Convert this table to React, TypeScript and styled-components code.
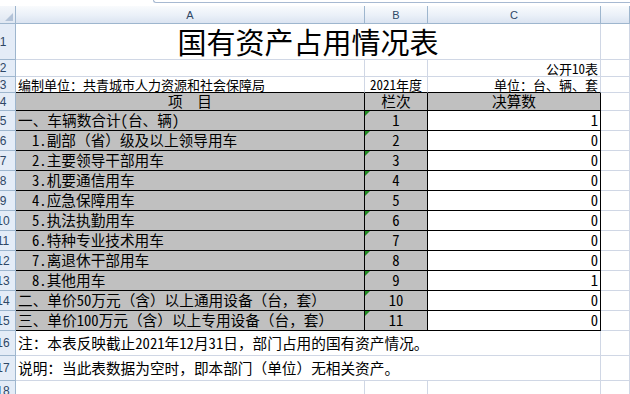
import React from "react";
import styled, { createGlobalStyle, css } from "styled-components";

const GRID = "#d0d7e5";
const HEAD_LINE = "#9eb6ce";
const BLACK = "#000000";
const GRAY = "#c0c0c0";
const COLS = "16px 349px 63px 173px 1fr";

const GlobalStyle = createGlobalStyle`
  html, body { margin: 0; padding: 0; background: #ffffff; overflow: hidden; }
  body { font-family: "Noto Sans CJK SC", "Noto Sans CJK JP", sans-serif; }
  #root { width: 630px; height: 394px; }
`;

const Sheet = styled.div`
  width: 630px;
  height: 394px;
  overflow: hidden;
  background: #ffffff;
  display: flex;
  flex-direction: column;
`;

const TopStrip = styled.div`
  flex: none;
  height: 6px;
  display: flex;
  background: #ffffff;
`;

const FormulaEdge = styled.div`
  margin-left: 153px;
  flex: 1;
  height: 2px;
  border-left: 1px solid #a7b9d1;
  border-bottom: 1px solid #a7b9d1;
  border-bottom-left-radius: 3px;
`;

const Row = styled.div<{ $h: number }>`
  flex: none;
  display: grid;
  grid-template-columns: ${COLS};
  grid-template-rows: ${(p) => p.$h}px;
  height: ${(p) => p.$h}px;
`;

const HeadBase = css`
  box-sizing: border-box;
  border-right: 1px solid ${HEAD_LINE};
  border-bottom: 1px solid ${HEAD_LINE};
  color: #2e4766;
  font-family: "Liberation Sans", Arial, sans-serif;
`;

const Corner = styled.div`
  ${HeadBase};
  background: linear-gradient(#f4f7fb, #dfe7f2);
  display: flex;
  align-items: flex-end;
  justify-content: flex-end;
  padding: 0 2px 2px 0;
`;

const CornerMark = styled.div`
  width: 0;
  height: 0;
  border-left: 8px solid transparent;
  border-bottom: 8px solid #b3c3d8;
`;

const ColHead = styled.div`
  ${HeadBase};
  background: linear-gradient(#f9fbfd, #eaf0f8 55%, #dbe4f1);
  display: flex;
  align-items: center;
  justify-content: center;
  font-size: 11px;
`;

const RowHead = styled.div`
  ${HeadBase};
  background: #e4ecf7;
  overflow: hidden;
  display: flex;
  align-items: center;
  justify-content: flex-end;
`;

const RowNum = styled.span`
  flex: none;
  width: 24px;
  text-align: center;
  font-size: 12px;
  line-height: 1;
`;

type Align = "left" | "center" | "right";

const Cell = styled.div<{
  $fill?: string;
  $align?: Align;
  $bottom?: string;
  $right?: string;
  $span?: number;
  $size?: number;
  $pb?: number;
  $indent?: number;
  $flag?: boolean;
}>`
  position: relative;
  box-sizing: border-box;
  min-width: 0;
  grid-column: span ${(p) => p.$span ?? 1};
  background: ${(p) => p.$fill ?? "#ffffff"};
  border-right: 1px solid ${(p) => p.$right ?? GRID};
  border-bottom: 1px solid ${(p) => p.$bottom ?? GRID};
  display: flex;
  align-items: flex-end;
  justify-content: ${(p) =>
    p.$align === "center" ? "center" : p.$align === "right" ? "flex-end" : "flex-start"};
  padding: 0 2px ${(p) => p.$pb ?? 2}px ${(p) => 2 + (p.$indent ?? 0)}px;
  font-size: ${(p) => p.$size ?? 14.67}px;
  line-height: 1;
  white-space: nowrap;
  color: #000000;
  ${(p) =>
    p.$flag &&
    css`
      &::before {
        content: "";
        position: absolute;
        left: 0;
        top: 0;
        border-top: 5px solid #1f8a1f;
        border-right: 5px solid transparent;
      }
    `}
`;

const Half = styled.span`
  font-feature-settings: "hwid" 1;
`;

function T({ children }: { children: string }) {
  const parts = children.split(/([\x21-\x7e]+)/);
  return (
    <>
      {parts.map((p, i) =>
        /[\x21-\x7e]/.test(p) ? <Half key={i}>{p}</Half> : <React.Fragment key={i}>{p}</React.Fragment>
      )}
    </>
  );
}

const items = [
  { label: "一、车辆数合计(台、辆)", indent: 0, value: "1" },
  { label: "1.副部（省）级及以上领导用车", indent: 14, value: "0" },
  { label: "2.主要领导干部用车", indent: 14, value: "0" },
  { label: "3.机要通信用车", indent: 14, value: "0" },
  { label: "4.应急保障用车", indent: 14, value: "0" },
  { label: "5.执法执勤用车", indent: 14, value: "0" },
  { label: "6.特种专业技术用车", indent: 14, value: "0" },
  { label: "7.离退休干部用车", indent: 14, value: "0" },
  { label: "8.其他用车", indent: 14, value: "1" },
  { label: "二、单价50万元（含）以上通用设备（台，套）", indent: 0, value: "0" },
  { label: "三、单价100万元（含）以上专用设备（台，套）", indent: 0, value: "0" },
];

export default function App() {
  return (
    <>
      <GlobalStyle />
      <Sheet>
        <TopStrip>
          <FormulaEdge />
        </TopStrip>

        <Row $h={18}>
          <Corner>
            <CornerMark />
          </Corner>
          <ColHead>A</ColHead>
          <ColHead>B</ColHead>
          <ColHead>C</ColHead>
          <ColHead />
        </Row>

        <Row $h={36}>
          <RowHead>
            <RowNum>1</RowNum>
          </RowHead>
          <Cell $span={3} $align="center" $size={29} $pb={3}>
            国有资产占用情况表
          </Cell>
          <Cell />
        </Row>

        <Row $h={17}>
          <RowHead>
            <RowNum>2</RowNum>
          </RowHead>
          <Cell />
          <Cell />
          <Cell $align="right" $size={13} $pb={1}>
            <T>公开10表</T>
          </Cell>
          <Cell />
        </Row>

        <Row $h={16}>
          <RowHead>
            <RowNum>3</RowNum>
          </RowHead>
          <Cell $size={13} $pb={1} $bottom={BLACK}>
            编制单位：共青城市人力资源和社会保障局
          </Cell>
          <Cell $align="center" $size={13} $pb={1} $bottom={BLACK}>
            <T>2021年度</T>
          </Cell>
          <Cell $align="right" $size={13} $pb={1} $bottom={BLACK}>
            单位：台、辆、套
          </Cell>
          <Cell />
        </Row>

        <Row $h={18}>
          <RowHead>
            <RowNum>4</RowNum>
          </RowHead>
          <Cell $align="center" $fill={GRAY} $pb={1} $bottom={BLACK} $right={BLACK}>
            项　目
          </Cell>
          <Cell $align="center" $fill={GRAY} $pb={1} $bottom={BLACK} $right={BLACK}>
            栏次
          </Cell>
          <Cell $align="center" $fill={GRAY} $pb={1} $bottom={BLACK} $right={BLACK}>
            决算数
          </Cell>
          <Cell />
        </Row>

        {items.map((it, i) => (
          <Row $h={20} key={i}>
            <RowHead>
              <RowNum>{i + 5}</RowNum>
            </RowHead>
            <Cell $fill={GRAY} $indent={it.indent} $bottom={BLACK} $right={BLACK}>
              <T>{it.label}</T>
            </Cell>
            <Cell $align="center" $fill={GRAY} $bottom={BLACK} $right={BLACK} $flag>
              <T>{String(i + 1)}</T>
            </Cell>
            <Cell $align="right" $bottom={BLACK} $right={BLACK}>
              <T>{it.value}</T>
            </Cell>
            <Cell />
          </Row>
        ))}

        <Row $h={25}>
          <RowHead>
            <RowNum>16</RowNum>
          </RowHead>
          <Cell $span={3} $pb={4}>
            <T>注：本表反映截止2021年12月31日，部门占用的国有资产情况。</T>
          </Cell>
          <Cell />
        </Row>

        <Row $h={25}>
          <RowHead>
            <RowNum>17</RowNum>
          </RowHead>
          <Cell $span={3} $pb={4}>
            说明：当此表数据为空时，即本部门（单位）无相关资产。
          </Cell>
          <Cell />
        </Row>

        <Row $h={20}>
          <RowHead>
            <RowNum>18</RowNum>
          </RowHead>
          <Cell />
          <Cell />
          <Cell />
          <Cell />
        </Row>
      </Sheet>
    </>
  );
}
